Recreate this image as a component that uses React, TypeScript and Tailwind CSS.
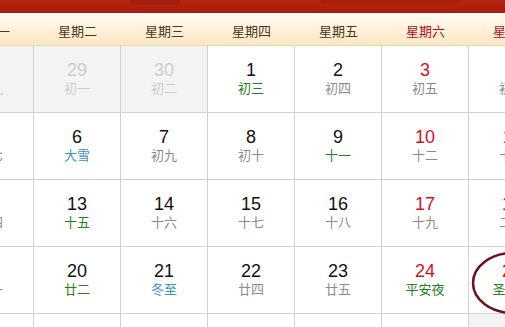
import React from "react"

type Kind = "normal" | "prev" | "green" | "term"
type Day = { d: number; l: string; k?: Kind; circle?: boolean }

const weekDays = ["星期一", "星期二", "星期三", "星期四", "星期五", "星期六", "星期日"]

const weeks: Day[][] = [
    [
        { d: 28, l: "廿九", k: "prev" },
        { d: 29, l: "初一", k: "prev" },
        { d: 30, l: "初二", k: "prev" },
        { d: 1, l: "初三", k: "green" },
        { d: 2, l: "初四" },
        { d: 3, l: "初五" },
        { d: 4, l: "初六" },
    ],
    [
        { d: 5, l: "初七" },
        { d: 6, l: "大雪", k: "term" },
        { d: 7, l: "初九" },
        { d: 8, l: "初十" },
        { d: 9, l: "十一", k: "green" },
        { d: 10, l: "十二" },
        { d: 11, l: "十三" },
    ],
    [
        { d: 12, l: "十四" },
        { d: 13, l: "十五", k: "green" },
        { d: 14, l: "十六" },
        { d: 15, l: "十七" },
        { d: 16, l: "十八" },
        { d: 17, l: "十九" },
        { d: 18, l: "二十" },
    ],
    [
        { d: 19, l: "廿一" },
        { d: 20, l: "廿二", k: "green" },
        { d: 21, l: "冬至", k: "term" },
        { d: 22, l: "廿四" },
        { d: 23, l: "廿五" },
        { d: 24, l: "平安夜", k: "green" },
        { d: 25, l: "圣诞节", k: "green", circle: true },
    ],
    [
        { d: 26, l: "廿八" },
        { d: 27, l: "廿九" },
        { d: 28, l: "三十" },
        { d: 29, l: "腊月" },
        { d: 30, l: "初二" },
        { d: 31, l: "初三" },
        { d: 1, l: "初四", k: "prev" },
    ],
]

const lunarColor = (k?: Kind) => {
    if (k === "prev") return "text-[#cdcdcd]"
    if (k === "green") return "text-[#1f7f1f]"
    if (k === "term") return "text-[#3a93b8]"
    return "text-[#8c8c8c]"
}

const DayCell = ({ day, col }: { day: Day; col: number }) => {
    const weekend = col >= 5
    const numColor = day.k === "prev" ? "text-[#cdcdcd]" : weekend ? "text-[#d0121e]" : "text-[#111]"
    return (
        <div className={`relative h-[67px] border-r border-b border-[#d2d2d2] pt-[14px] text-center ${day.k === "prev" ? "bg-[#f3f3f3]" : "bg-white"}`}>
            <div className={`text-[18px] leading-[20px] font-['Liberation_Sans',Arial,sans-serif] ${numColor}`}>{day.d}</div>
            <div className={`text-[13px] leading-[16px] ${lunarColor(day.k)}`}>{day.l}</div>
            {day.circle && (
                <svg className="absolute left-[2px] top-[4px]" width="84" height="64" viewBox="0 0 84 64">
                    <ellipse cx="42" cy="32" rx="40" ry="30" fill="none" stroke="#6d0d17" strokeWidth="2.5" />
                </svg>
            )}
        </div>
    )
}

export default function App() {
    return (
        <div className="w-[505px] h-[327px] overflow-hidden bg-white font-['Noto_Sans_CJK_SC','Liberation_Sans',sans-serif]">
            {/* red banner strip */}
            <div className="h-[13px] bg-gradient-to-b from-[#b8250f] to-[#a81d0c] flex">
                <div className="w-[130px]" />
                <div className="w-[50px] h-[5px] rounded-b-sm bg-[#a41f0d]" />
                <div className="w-[140px]" />
                <div className="w-[140px] h-[4px] rounded-b-sm bg-[#a6200d]" />
            </div>
            <div className="ml-[-53px] w-[609px]">
                <div className="grid grid-cols-[repeat(7,87px)] h-[33px] border-b border-[#ead7b4] bg-gradient-to-b from-[#fffcf5] to-[#fbe7c2]">
                    {weekDays.map((w, i) => (
                        <div key={w} className={`flex items-center justify-center pt-[3px] text-[13px] ${i >= 5 ? "text-[#b3121c]" : "text-[#4a3818]"}`}>
                            {w}
                        </div>
                    ))}
                </div>
                {weeks.map((week, r) => (
                    <div key={r} className="grid grid-cols-[repeat(7,87px)]">
                        {week.map((day, c) => (
                            <DayCell key={c} day={day} col={c} />
                        ))}
                    </div>
                ))}
            </div>
        </div>
    )
}
